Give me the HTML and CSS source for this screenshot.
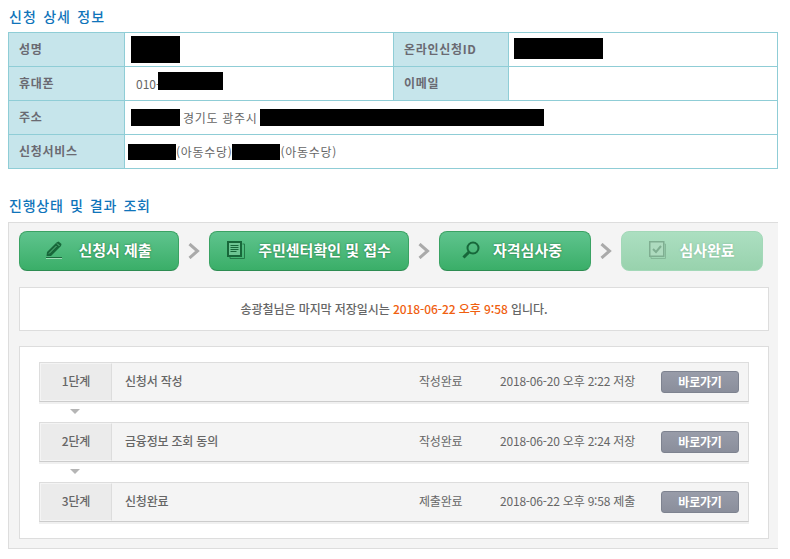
FILE: index.html
```html
<!DOCTYPE html>
<html lang="ko">

<head>
    <title>신청 상세 정보</title>
    <link rel="stylesheet" href="styles.css">
</head>

<body>
    <h2 class="title">신청 상세 정보</h2>
    <table class="info">
        <tr>
            <th class="col-a">성명</th>
            <td class="col-b"><div class="val pad-name"><span class="mask m-name"></span></div></td>
            <th class="col-c">온라인신청ID</th>
            <td><div class="val pad-id"><span class="mask m-id"></span></div></td>
        </tr>
        <tr>
            <th>휴대폰</th>
            <td><div class="val pad-phone">010-<span class="mask m-phone"></span></div></td>
            <th>이메일</th>
            <td></td>
        </tr>
        <tr>
            <th>주소</th>
            <td colspan="3"><div class="val pad-name"><span class="mask m-zip"></span><span class="addr">경기도 광주시</span><span class="mask m-addr"></span></div></td>
        </tr>
        <tr>
            <th>신청서비스</th>
            <td colspan="3"><div class="val pad-svc"><span class="mask m-svc"></span>(아동수당)<span class="mask m-svc"></span>(아동수당)</div></td>
        </tr>
    </table>

    <h2 class="title second">진행상태 및 결과 조회</h2>
    <div class="panel">
        <div class="steps">
            <div class="step s1">
                <svg class="ico" width="17" height="18" viewBox="0 0 17 18"><path d="M0.5 15 L1 11 L10.5 1.5 L12.5 0.5 L15.5 3 L15 5 L5 15 Z" fill="#17673a"/><path d="M3 12.5 L10.5 5" stroke="#5cbb80" stroke-width="1"/><path d="M11 2.5 L13.5 5" stroke="#5cbb80" stroke-width="1"/><path d="M0 16.5 H16" stroke="#1b6b3f" stroke-width="1"/><path d="M0 17.5 H16" stroke="#9ddcb6" stroke-width="1"/></svg>
                <span>신청서 제출</span>
            </div>
            <svg class="chev" width="12" height="16" viewBox="0 0 12 16"><path d="M1.5 1 L9.5 8 L1.5 15" fill="none" stroke="#aaa" stroke-width="3"/></svg>
            <div class="step s2">
                <svg class="ico" width="18" height="18" viewBox="0 0 18 18"><path d="M15.5 3 H17.5 V17.5 H3 V15.5" fill="none" stroke="#237a48" stroke-width="1"/><rect x="0" y="0" width="15" height="16" fill="#17673a"/><rect x="2" y="2" width="11" height="12" fill="#6cc492"/><path d="M3.5 4.5 H11.5 M3.5 6.5 H11.5 M3.5 8.5 H11.5 M3.5 10.5 H9.5" stroke="#17673a"/></svg>
                <span>주민센터확인 및 접수</span>
            </div>
            <svg class="chev" width="12" height="16" viewBox="0 0 12 16"><path d="M1.5 1 L9.5 8 L1.5 15" fill="none" stroke="#aaa" stroke-width="3"/></svg>
            <div class="step s3">
                <svg class="ico" width="18" height="18" viewBox="0 0 18 18"><circle cx="11" cy="7" r="5.5" fill="none" stroke="#17673a" stroke-width="2"/><path d="M7 11 L1.5 16.5" stroke="#17673a" stroke-width="3"/></svg>
                <span>자격심사중</span>
            </div>
            <svg class="chev" width="12" height="16" viewBox="0 0 12 16"><path d="M1.5 1 L9.5 8 L1.5 15" fill="none" stroke="#aaa" stroke-width="3"/></svg>
            <div class="step s4">
                <svg class="ico" width="17" height="18" viewBox="0 0 17 18"><path d="M15.5 3 H16.5 V17.5 H2 V16" fill="none" stroke="#85b898"/><rect x="0.75" y="0.75" width="14" height="14.5" fill="#aedbbf" stroke="#7fae91" stroke-width="1.5"/><path d="M4 8 L7 11 L12 5" fill="none" stroke="#7fae91" stroke-width="2"/></svg>
                <span>심사완료</span>
            </div>
        </div>

        <div class="notice">송광철님은 마지막 저장일시는 <b>2018-06-22 오후 9:58</b> 입니다.</div>

        <div class="stages">
            <div class="stage">
                <div class="no">1단계</div>
                <div class="name">신청서 작성</div>
                <div class="state">작성완료</div>
                <div class="date">2018-06-20 오후 2:22 저장</div>
                <a class="go">바로가기</a>
            </div>
            <div class="down"></div>
            <div class="stage">
                <div class="no">2단계</div>
                <div class="name">금융정보 조회 동의</div>
                <div class="state">작성완료</div>
                <div class="date">2018-06-20 오후 2:24 저장</div>
                <a class="go">바로가기</a>
            </div>
            <div class="down"></div>
            <div class="stage">
                <div class="no">3단계</div>
                <div class="name">신청완료</div>
                <div class="state">제출완료</div>
                <div class="date">2018-06-22 오후 9:58 제출</div>
                <a class="go">바로가기</a>
            </div>
        </div>
    </div>
</body>

</html>
```

FILE: styles.css
```css
body {
    margin: 0;
    padding: 0 12px 8px 8px;
    font-family: "Noto Sans CJK KR", "Noto Sans", sans-serif;
    font-size: 12px;
    color: #666;
    background: #fff;
}

.title {
    margin: 0;
    height: 32px;
    padding: 6px 0 0 1px;
    box-sizing: border-box;
    font-size: 14px;
    line-height: 20px;
    font-weight: 500;
    letter-spacing: 1px;
    word-spacing: 1.5px;
    color: #0f74ba;
}

.second {
    height: 33px;
    margin-top: 20px;
    padding-top: 6px;
    letter-spacing: 0.8px;
}

.info {
    width: 770px;
    height: 137px;
    border-collapse: collapse;
    table-layout: fixed;
}

.info th,
.info td {
    height: 33px;
    padding: 0;
    border: 1px solid #8fcdd6;
}

.info th {
    padding-left: 10px;
    vertical-align: top;
    text-align: left;
    font-weight: 700;
    line-height: 31px;
    letter-spacing: 0.7px;
    color: #6a6a72;
    background-color: #c6e5eb;
}

.col-a {
    width: 105px;
}

.col-b {
    width: 268px;
}

.col-c {
    width: 104px;
}

.val {
    display: flex;
    align-items: center;
    height: 33px;
    letter-spacing: 0.7px;
}

.pad-name {
    padding-left: 6px;
}

.pad-id {
    padding-left: 5px;
}

.pad-phone {
    padding-left: 11px;
    letter-spacing: 0;
}

.pad-svc {
    padding-left: 3px;
}

.mask {
    display: block;
    background: #000;
}

.m-name {
    width: 49px;
    height: 27px;
}

.m-id {
    width: 89px;
    height: 21px;
    margin-bottom: 2px;
}

.m-phone {
    width: 65px;
    height: 18px;
    margin: 0 0 6px -2px;
}

.m-zip {
    width: 49px;
    height: 17px;
}

.m-addr {
    width: 284px;
    height: 17px;
}

.m-svc {
    width: 48px;
    height: 16px;
}

.addr {
    width: 80px;
    padding-left: 3px;
    box-sizing: border-box;
    white-space: nowrap;
}

.panel {
    width: 770px;
    box-sizing: border-box;
    padding: 8px 9px 9px 10px;
    background-color: #f4f4f4;
    border-top: 1px solid #ddd;
    border-left: 1px solid #ddd;
    border-bottom: 1px solid #ddd;
}

.steps {
    display: flex;
    align-items: center;
    height: 40px;
    gap: 9px;
}

.step {
    display: flex;
    align-items: center;
    justify-content: center;
    gap: 15px;
    height: 40px;
    padding-bottom: 3px;
    box-sizing: border-box;
    border-radius: 8px;
    border: 1px solid #3aa263;
    border-bottom-color: #2d8c52;
    background: linear-gradient(#5fc48e, #3aae68);
    color: #fff;
    font-size: 15px;
    font-weight: 700;
    text-shadow: 0 0 2px #1f6e3e;
}

.s1 {
    width: 160px;
}

.s2 {
    width: 200px;
    gap: 13px;
}

.s3 {
    width: 152px;
    gap: 13px;
    padding-right: 6px;
}

.s4 {
    width: 142px;
    gap: 13px;
    border-color: #a3d8b8;
    background: linear-gradient(#acdfc1, #98d2ad);
    text-shadow: 0 0 2px #7fb595;
}

.chev {
    flex: none;
}

.notice {
    margin-top: 16px;
    height: 44px;
    box-sizing: border-box;
    border: 1px solid #ddd;
    background: #fff;
    text-align: center;
    font-weight: 500;
    line-height: 41px;
    letter-spacing: -0.08px;
}

.notice b {
    font-weight: 500;
    color: #f0600f;
}

.stages {
    margin-top: 15px;
    height: 193px;
    box-sizing: border-box;
    padding: 15px 19px 0;
    border: 1px solid #ddd;
    background: #fff;
}

.stage {
    display: flex;
    align-items: center;
    height: 40px;
    box-sizing: border-box;
    border: 1px solid #ddd;
    border-bottom: 1px solid #ccc;
    background-color: #f4f4f4;
    box-shadow: 0 2px 0 #f0f0f0;
    letter-spacing: -0.2px;
}

.no {
    align-self: stretch;
    width: 72px;
    box-sizing: border-box;
    border: 1px solid #f4f4f4;
    border-right: 1px solid #ddd;
    background-color: #ebebeb;
    font-weight: 500;
    line-height: 34px;
    text-align: center;
}

.name {
    width: 307px;
    padding: 0 0 3px 13px;
    box-sizing: border-box;
    font-weight: 500;
}

.state {
    width: 81px;
    padding-bottom: 3px;
}

.date {
    width: 161px;
    padding-bottom: 3px;
    white-space: nowrap;
}

.go {
    width: 78px;
    height: 22px;
    box-sizing: border-box;
    border: 1px solid #7e8390;
    border-radius: 3px;
    background: linear-gradient(#989ca9, #8a8e9b);
    color: #fff;
    font-weight: 700;
    line-height: 20px;
    text-align: center;
}

.down {
    width: 0;
    height: 0;
    margin: 7px 0 8px 31px;
    border-top: 5px solid #b5b5b5;
    border-left: 5px solid transparent;
    border-right: 5px solid transparent;
}
```
